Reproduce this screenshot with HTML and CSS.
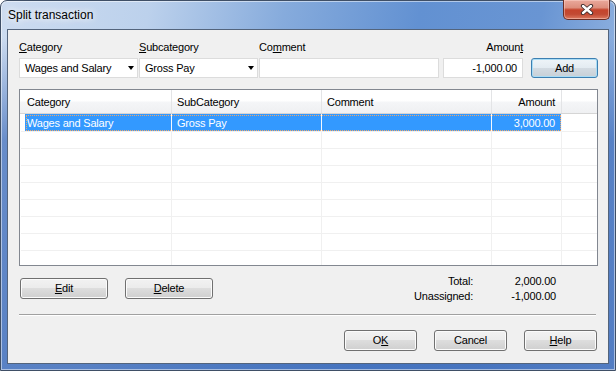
FILE: index.html
```html
<!DOCTYPE html>
<html>
<head>
<meta charset="utf-8">
<title>Split transaction</title>
<link rel="stylesheet" href="styles.css">
</head>
<body>
<div class="window">
  <div class="titlebar">
    <span class="title">Split transaction</span>
    <div class="close">
      <svg width="14" height="11" viewBox="0 0 14 11">
        <path d="M3 2 L11 9 M11 2 L3 9" stroke="#3b2a2a" stroke-width="4.2" stroke-linecap="round" fill="none"/>
        <path d="M3 2 L11 9 M11 2 L3 9" stroke="#ffffff" stroke-width="2.4" stroke-linecap="round" fill="none"/>
      </svg>
    </div>
  </div>
  <div class="client">
    <div class="labels">
      <span class="c1"><u>C</u>ategory</span>
      <span class="c2"><u>S</u>ubcategory</span>
      <span class="c3">Co<u>m</u>ment</span>
      <span class="c4 right">Amoun<u>t</u></span>
      <span class="c5"></span>
    </div>
    <div class="fields">
      <div class="combo c1"><span>Wages and Salary</span><i class="caret"></i></div>
      <div class="combo c2"><span>Gross Pay</span><i class="caret"></i></div>
      <div class="textbox c3"></div>
      <div class="textbox c4 right">-1,000.00</div>
      <div class="btn default c5">Add</div>
    </div>

    <div class="list">
      <div class="hrow">
        <div class="hpad"></div>
        <div class="hcell cat">Category</div>
        <div class="hcell sub">SubCategory</div>
        <div class="hcell com">Comment</div>
        <div class="hcell amt">Amount</div>
        <div class="hfill"></div>
      </div>
      <div class="row first">
        <div class="pad"></div>
        <div class="sel">
          <div class="cell cat">Wages and Salary</div>
          <div class="cell sub">Gross Pay</div>
          <div class="cell com"></div>
          <div class="cell amt">3,000.00</div>
        </div>
        <div class="cell fill"></div>
      </div>
      <div class="row"><div class="pad"></div><div class="cell cat"></div><div class="cell sub"></div><div class="cell com"></div><div class="cell amt"></div><div class="cell fill"></div></div>
      <div class="row"><div class="pad"></div><div class="cell cat"></div><div class="cell sub"></div><div class="cell com"></div><div class="cell amt"></div><div class="cell fill"></div></div>
      <div class="row"><div class="pad"></div><div class="cell cat"></div><div class="cell sub"></div><div class="cell com"></div><div class="cell amt"></div><div class="cell fill"></div></div>
      <div class="row"><div class="pad"></div><div class="cell cat"></div><div class="cell sub"></div><div class="cell com"></div><div class="cell amt"></div><div class="cell fill"></div></div>
      <div class="row"><div class="pad"></div><div class="cell cat"></div><div class="cell sub"></div><div class="cell com"></div><div class="cell amt"></div><div class="cell fill"></div></div>
      <div class="row"><div class="pad"></div><div class="cell cat"></div><div class="cell sub"></div><div class="cell com"></div><div class="cell amt"></div><div class="cell fill"></div></div>
      <div class="row"><div class="pad"></div><div class="cell cat"></div><div class="cell sub"></div><div class="cell com"></div><div class="cell amt"></div><div class="cell fill"></div></div>
      <div class="row"><div class="pad"></div><div class="cell cat"></div><div class="cell sub"></div><div class="cell com"></div><div class="cell amt"></div><div class="cell fill"></div></div>
    </div>

    <div class="actions">
      <div class="btn edit"><u>E</u>dit</div>
      <div class="btn delete"><u>D</u>elete</div>
      <div class="totals">
        <span>Total:</span><span>2,000.00</span>
        <span>Unassigned:</span><span>-1,000.00</span>
      </div>
    </div>
    <div class="sep"></div>
    <div class="footer">
      <div class="btn">O<u>K</u></div>
      <div class="btn">Cancel</div>
      <div class="btn"><u>H</u>elp</div>
    </div>
  </div>
</div>
</body>
</html>
```

FILE: styles.css
```css
* { box-sizing: border-box; }
html, body { margin: 0; padding: 0; }
body {
  width: 616px;
  height: 371px;
  overflow: hidden;
  font-family: "Liberation Sans", Arial, sans-serif;
  font-size: 11px;
  letter-spacing: -0.2px;
  color: #000;
  background: #fff;
}
u { text-decoration: underline; text-underline-offset: 1px; }

.window {
  width: 616px;
  height: 371px;
  border: 1px solid #3f4f66;
  border-radius: 7px 7px 0 0;
  display: flex;
  flex-direction: column;
  background:
    linear-gradient(to bottom, rgba(62,108,186,0) 0, rgba(62,108,186,0) 36px, rgba(62,108,186,0.7) 140px, rgba(62,108,186,0.8) 100%),
    linear-gradient(100deg, #cddcf0 0%, #bcd1ec 22%, #86abdc 42%, #6291d2 62%, #6995d3 80%, #a3c0e6 100%);
  box-shadow: inset 0 0 0 1px rgba(255,255,255,0.5);
}

.titlebar {
  height: 28px;
  display: flex;
  align-items: flex-start;
  padding-left: 7px;
}
.title {
  font-size: 12px;
  letter-spacing: 0;
  line-height: 28px;
  text-shadow: 0 0 6px #fff, 0 0 10px rgba(255,255,255,0.85);
}
.close {
  margin-left: auto;
  margin-right: 5px;
  margin-top: -1px;
  width: 47px;
  height: 20px;
  border: 1px solid #6a2d25;
  border-top: 0;
  border-radius: 0 0 5px 5px;
  background: linear-gradient(#eaa99c 0%, #dd8f7d 40%, #c5442c 52%, #c24a33 75%, #dc7a60 100%);
  box-shadow: inset 0 0 0 1px rgba(255,220,210,0.45);
  display: flex;
  align-items: center;
  justify-content: center;
}

.client {
  flex: 1;
  margin: 0 6px 6px;
  border: 1px solid #53647c;
  background: #f0f0f0;
  padding: 11px 10px 0 11px;
  display: flex;
  flex-direction: column;
}

.labels { display: flex; height: 13px; line-height: 13px; }
.fields { display: flex; height: 20px; margin-top: 4px; }
.c1 { width: 119px; }
.c2 { width: 119px; margin-left: 1px; }
.c3 { width: 180px; margin-left: 1px; }
.c4 { width: 80px; margin-left: 4px; }
.c5 { width: 67px; margin-left: 8px; }
.right { text-align: right; }

.combo {
  display: flex;
  align-items: center;
  justify-content: space-between;
  background: #fff;
  border: 1px solid #dcdcdc;
  padding: 0 3px 0 5px;
  height: 20px;
}
.caret {
  width: 0;
  height: 0;
  border-left: 3.5px solid transparent;
  border-right: 3.5px solid transparent;
  border-top: 4px solid #000;
}
.textbox {
  background: #fff;
  border: 1px solid #dcdcdc;
  height: 20px;
  line-height: 18px;
  padding: 0 5px;
}

.btn {
  height: 21px;
  line-height: 19px;
  text-align: center;
  border: 1px solid #707070;
  border-radius: 3px;
  background: linear-gradient(#f2f2f2 0%, #ebebeb 50%, #dddddd 50%, #cfcfcf 100%);
  box-shadow: inset 0 0 0 1px #fbfbfb;
}
.btn.default {
  height: 20px;
  line-height: 18px;
  border-color: #3c7fb1;
  background: linear-gradient(#eef4f8 0%, #e3ebf1 50%, #d3dbe2 50%, #c8d0d7 100%);
  box-shadow: inset 0 0 0 1px #a9dcf5;
}

.list {
  margin-top: 11px;
  height: 177px;
  border: 1px solid #828790;
  background: #fff;
  overflow: hidden;
}
.hrow {
  display: flex;
  height: 24px;
  border-bottom: 1px solid #d5d5d5;
  background: linear-gradient(#ffffff 0%, #ffffff 45%, #f4f5f7 55%, #eff0f2 100%);
  line-height: 21px;
  padding-top: 2px;
}
.hpad { width: 5px; }
.hcell { border-right: 1px solid #e3e4e6; padding-left: 5px; margin-top: -2px; padding-top: 2px; }
.hcell.cat { padding-left: 2px; }
.hcell.amt { text-align: right; padding-right: 6px; padding-left: 0; }
.hfill { flex: 1; }

.cat { width: 147px; }
.sub { width: 150px; }
.com { width: 170px; }
.amt { width: 70px; }
.fill { flex: 1; }

.row { display: flex; height: 17px; padding-left: 1px; }
.row.first { height: 18px; }
.pad { width: 4px; border-bottom: 1px solid #f0f0f0; }
.cell {
  border-right: 1px solid #f0f0f0;
  border-bottom: 1px solid #f0f0f0;
  padding-left: 5px;
  line-height: 16px;
  white-space: nowrap;
}
.cell.cat { padding-left: 2px; }
.cell.amt { text-align: right; padding-right: 6px; padding-left: 0; }
.cell.fill { border-right: 0; }
.sel {
  display: flex;
  outline: 1px dotted #f0a868;
  outline-offset: -2px;
}
.sel .cell {
  background: #3399ff;
  color: #fff;
  line-height: 16px;
  padding-top: 1px;
  border-right-color: #f4f8ff;
}

.actions { display: flex; align-items: flex-start; margin-top: 8px; }
.actions .btn { width: 88px; margin-top: 4px; }
.edit { margin-left: 1px; }
.delete { margin-left: 17px; }
.totals {
  margin-left: auto;
  margin-right: 42px;
  display: grid;
  grid-template-columns: auto 83px;
  line-height: 15px;
  text-align: right;
}

.sep {
  margin-top: 10px;
  margin-right: 2px;
  height: 0;
  border-top: 1px solid #a0a0a0;
  border-bottom: 1px solid #ffffff;
}
.footer {
  display: flex;
  justify-content: flex-end;
  gap: 17px;
  margin-top: 14px;
  padding-right: 1px;
}
.footer .btn { width: 73px; }
```
